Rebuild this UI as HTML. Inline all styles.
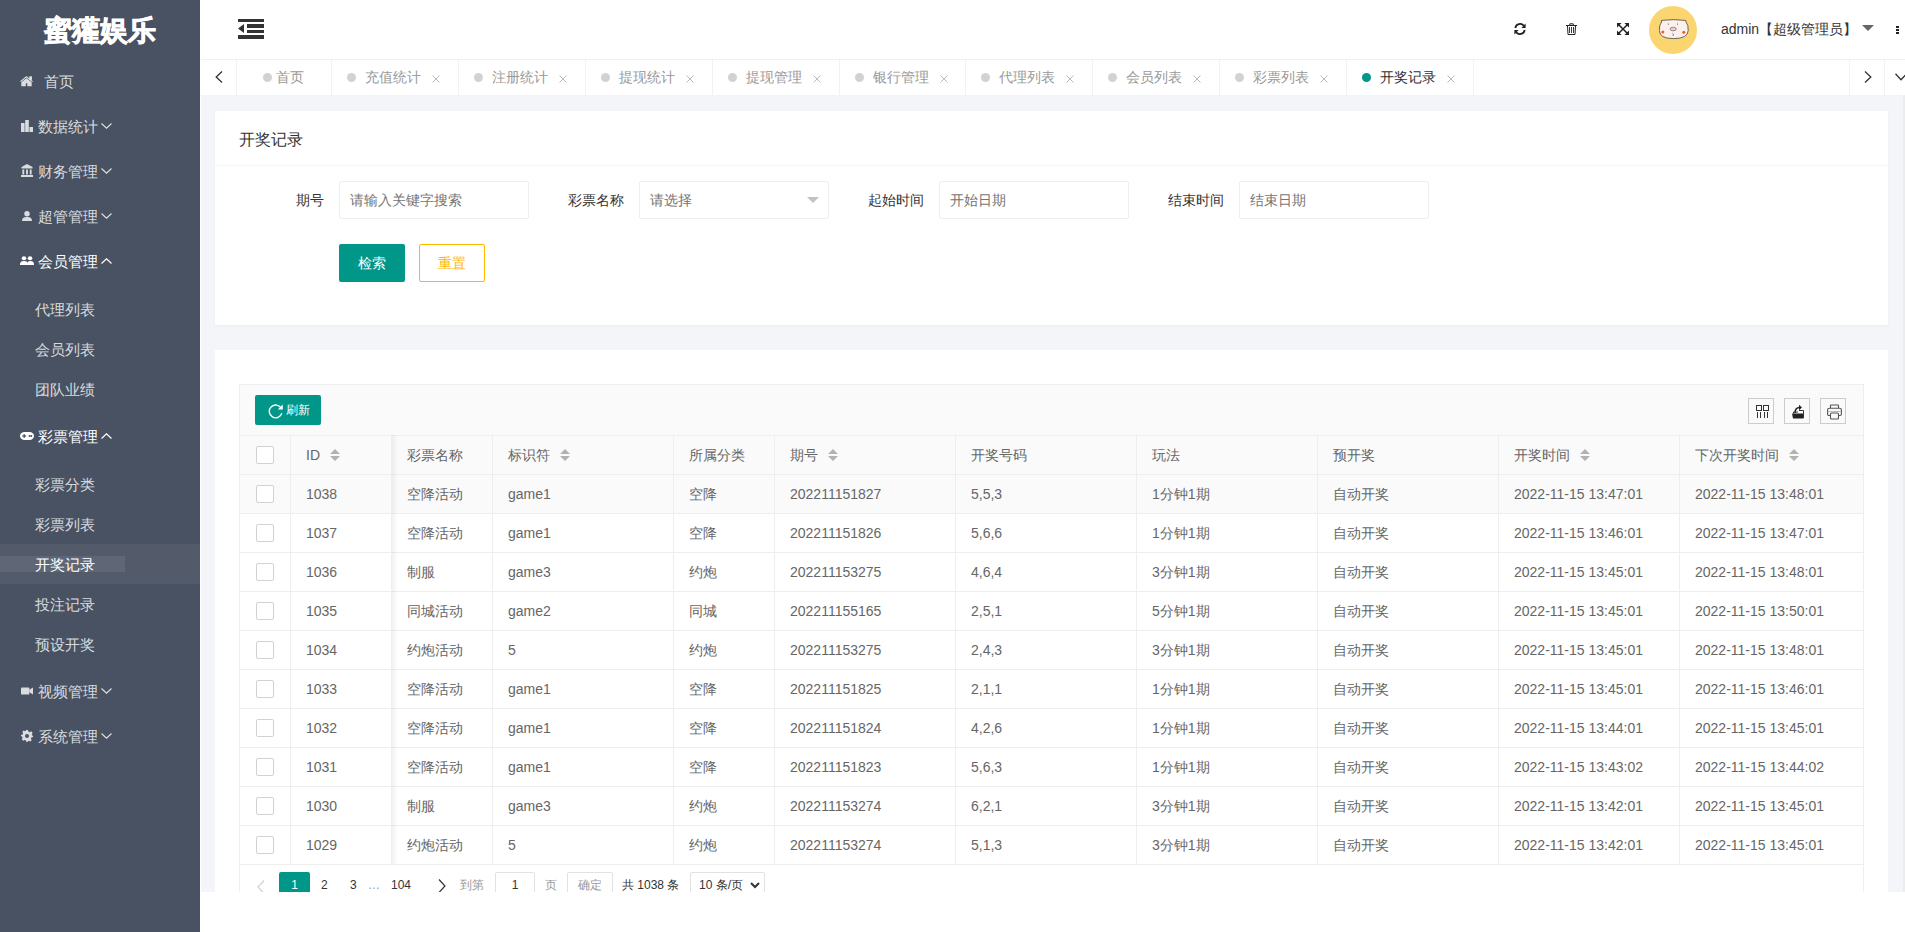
<!DOCTYPE html><html><head><meta charset="utf-8"><style>*{box-sizing:border-box;margin:0;padding:0}
html,body{width:1905px;height:932px;overflow:hidden;background:#fff;font-family:"Liberation Sans",sans-serif;font-size:14px;color:#666;position:relative}
.ab{position:absolute}
.side{position:absolute;left:0;top:0;width:200px;height:932px;background:#485262}
.logo{position:absolute;left:0;top:13px;width:200px;text-align:center;font-size:28px;font-weight:900;color:#fff;-webkit-text-stroke:0.8px #fff;line-height:36px}
.nt{color:rgba(255,255,255,.8)}
.nt svg{display:block}
.nt.w{color:#fff}
.lbl{position:absolute;font-size:15px;line-height:20px;white-space:nowrap}
.chev{position:absolute}
.selrow{position:absolute;left:0;top:544px;width:200px;height:40px;background:#535b6b}
.selin{position:absolute;left:0;top:556px;width:125px;height:16px;background:#5f6776}
.hdr{position:absolute;left:200px;top:0;width:1705px;height:59px;background:#fff}
.hdr .ab{position:absolute}
.avatar{position:absolute;left:1649px;top:6px;width:48px;height:48px;border-radius:50%;background:#fbd56f}
.uname{position:absolute;left:1721px;top:19px;font-size:14px;line-height:20px;color:#333;white-space:nowrap}
.tabs{position:absolute;left:0;top:0}
.tline{position:absolute;left:201px;top:59px;width:1704px;height:1px;background:#f0f0f0}
.vb{position:absolute;top:60px;width:1px;height:35px;background:#f2f2f2}
.dot{position:absolute;top:73px;width:9px;height:9px;border-radius:50%;background:#d2d2d2}
.dot.act{background:#009688}
.tt{position:absolute;top:67px;font-size:14px;line-height:20px;color:#999;white-space:nowrap}
.tt.act{color:#333}
.bodybg{position:absolute;left:201px;top:95px;width:1704px;height:797px;background:#f3f5f9}
.card{position:absolute;left:215px;width:1673px;background:#fff}
.c1{box-shadow:0 1px 2px rgba(0,0,0,.04)}
.c1{top:111px;height:214px}
.c2{top:350px;height:542px}
.ctitle{position:absolute;left:239px;top:129px;font-size:16.2px;line-height:20px;color:#333}
.cdiv{position:absolute;left:215px;top:165px;width:1673px;height:1px;background:#f6f6f6}
.flabel{position:absolute;top:190px;font-size:14px;line-height:20px;color:#333}
.finput{position:absolute;top:181px;width:190px;height:38px;border:1px solid #eee;border-radius:2px;background:#fff}
.finput span{position:absolute;left:10px;top:8px;line-height:20px;color:#757575;white-space:nowrap}
.btn{position:absolute;height:38px;line-height:38px;text-align:center;background:#009688;color:#fff;border-radius:2px}
.btn2{position:absolute;height:38px;line-height:36px;text-align:center;border:1px solid #ffb800;color:#ffb800;border-radius:2px;background:#fff;width:66px}
.tbox{position:absolute;left:239px;top:384px;width:1625px;height:508px;border:1px solid #eee;border-bottom:none;background:#fff}
.tool{position:absolute;left:240px;top:385px;width:1623px;height:51px;background:#fafafa;border-bottom:1px solid #eee}
.btnsm{position:absolute;left:255px;top:395px;width:66px;height:30px;background:#009688;border-radius:2px;color:#fff;font-size:12px}
.btnsm span{position:absolute;left:31px;top:7px;line-height:16px;font-size:12px}
.tsq{position:absolute;top:398px;width:26px;height:26px;border:1px solid #ccc}
.thead{position:absolute;left:240px;top:436px;width:1623px;height:38px;background:#fafafa}
.row1{position:absolute;left:240px;top:475px;width:1623px;height:38px;background:#fafafa}
.hl{position:absolute;left:240px;width:1623px;height:1px;background:#eee}
.vl{position:absolute;top:436px;width:1px;height:428px;background:#eee}
.fixshadow{position:absolute;left:392px;top:435px;width:6px;height:429px;background:linear-gradient(to right,rgba(0,0,0,.05),rgba(0,0,0,0))}
.cb{position:absolute;left:256px;width:18px;height:18px;border:1px solid #d2d2d2;border-radius:2px;background:#fff}
.th{position:absolute;top:445px;font-size:14px;line-height:20px;color:#666;white-space:nowrap}
.td{position:absolute;font-size:14px;line-height:20px;color:#666;white-space:nowrap}
.pgclip{position:absolute;left:240px;top:865px;width:1623px;height:27px;overflow:hidden}
.pg{position:absolute;top:7px;height:28px;line-height:26px;font-size:12px;text-align:center}
.pgbox{position:absolute;top:7px;height:28px;line-height:25px;font-size:12px;text-align:center;border:1px solid #e2e2e2;border-radius:2px;background:#fff}
.pg{white-space:nowrap}
</style></head><body>
<div class="side">
<div class="logo">蜜獾娱乐</div>
<div class="nt" style="left:20px;top:76px;position:absolute"><svg width="14" height="11" viewBox="0 0 14 11"><path d="M0 5.2 L6.5 0 L13 5.2 L12.2 6 L6.5 1.5 L0.8 6 Z" fill="currentColor"/><path d="M1.3 6.2 L6.5 2.2 L11.7 6.2 V10.2 H7.3 V7.2 H5.8 V10.2 H1.3 Z" fill="currentColor"/><rect x="9.3" y="0.3" width="2.7" height="3.5" fill="currentColor"/></svg></div>
<div class="nt lbl" style="left:44px;top:72px">首页</div>
<div class="nt" style="left:21px;top:120px;position:absolute"><svg width="12" height="12" viewBox="0 0 12 12"><rect x="0" y="3" width="3.6" height="9" fill="currentColor"/><rect x="4.2" y="0" width="3.6" height="12" fill="currentColor"/><rect x="8.4" y="7" width="3.6" height="5" fill="currentColor"/></svg></div>
<div class="nt lbl" style="left:38px;top:117px">数据统计</div>
<div class="nt"><svg class="chev" style="left:101px;top:123px" width="11" height="6" viewBox="0 0 11 6"><path d="M0.5 0.5 L5.5 5.2 L10.5 0.5" stroke="currentColor" stroke-width="1.2" fill="none"/></svg></div>
<div class="nt" style="left:21px;top:164px;position:absolute"><svg width="12" height="13" viewBox="0 0 13 13" preserveAspectRatio="none"><path d="M6.5 0 L0.5 3 V4.5 H12.5 V3 Z" fill="currentColor"/><rect x="1.5" y="5.5" width="2" height="5" fill="currentColor"/><rect x="5.5" y="5.5" width="2" height="5" fill="currentColor"/><rect x="9.5" y="5.5" width="2" height="5" fill="currentColor"/><rect x="0" y="11" width="13" height="2" fill="currentColor"/></svg></div>
<div class="nt lbl" style="left:38px;top:162px">财务管理</div>
<div class="nt"><svg class="chev" style="left:101px;top:168px" width="11" height="6" viewBox="0 0 11 6"><path d="M0.5 0.5 L5.5 5.2 L10.5 0.5" stroke="currentColor" stroke-width="1.2" fill="none"/></svg></div>
<div class="nt" style="left:22px;top:211px;position:absolute"><svg width="10" height="10" viewBox="0 0 11 11" preserveAspectRatio="none"><circle cx="5.5" cy="3" r="3" fill="currentColor"/><path d="M0 11 C0 7 2.5 6.5 5.5 6.5 C8.5 6.5 11 7 11 11 Z" fill="currentColor"/></svg></div>
<div class="nt lbl" style="left:38px;top:207px">超管管理</div>
<div class="nt"><svg class="chev" style="left:101px;top:213px" width="11" height="6" viewBox="0 0 11 6"><path d="M0.5 0.5 L5.5 5.2 L10.5 0.5" stroke="currentColor" stroke-width="1.2" fill="none"/></svg></div>
<div class="nt w" style="left:20px;top:256px;position:absolute"><svg width="14" height="9" viewBox="0 0 14 10" preserveAspectRatio="none"><circle cx="4" cy="2.5" r="2.3" fill="currentColor"/><circle cx="10" cy="2.5" r="2.3" fill="currentColor"/><path d="M0 10 C0 6 1.8 5.5 4 5.5 C6.2 5.5 8 6 8 10 Z" fill="currentColor"/><path d="M7 10 C7.5 6.5 8 5.5 10 5.5 C12.2 5.5 14 6 14 10 Z" fill="currentColor"/></svg></div>
<div class="nt w lbl" style="left:38px;top:252px">会员管理</div>
<div class="nt w"><svg class="chev" style="left:101px;top:258px" width="11" height="6" viewBox="0 0 11 6"><path d="M0.5 5.5 L5.5 0.8 L10.5 5.5" stroke="currentColor" stroke-width="1.2" fill="none"/></svg></div>
<div class="nt w" style="left:20px;top:432px;position:absolute"><svg width="14" height="8" viewBox="0 0 14 9" preserveAspectRatio="none"><rect x="0" y="0" width="14" height="9" rx="4.5" fill="currentColor"/><rect x="2.2" y="3.8" width="4" height="1.4" fill="#485262"/><rect x="3.5" y="2.5" width="1.4" height="4" fill="#485262"/><circle cx="9.5" cy="4.5" r="1" fill="#485262"/><circle cx="11.3" cy="4.5" r="1" fill="#485262"/></svg></div>
<div class="nt w lbl" style="left:38px;top:427px">彩票管理</div>
<div class="nt w"><svg class="chev" style="left:101px;top:433px" width="11" height="6" viewBox="0 0 11 6"><path d="M0.5 5.5 L5.5 0.8 L10.5 5.5" stroke="currentColor" stroke-width="1.2" fill="none"/></svg></div>
<div class="nt" style="left:21px;top:687px;position:absolute"><svg width="12" height="8" viewBox="0 0 13 9" preserveAspectRatio="none"><rect x="0" y="0.5" width="9" height="8" rx="1" fill="currentColor"/><path d="M9 3 L13 0.5 V8.5 L9 6 Z" fill="currentColor"/></svg></div>
<div class="nt lbl" style="left:38px;top:682px">视频管理</div>
<div class="nt"><svg class="chev" style="left:101px;top:688px" width="11" height="6" viewBox="0 0 11 6"><path d="M0.5 0.5 L5.5 5.2 L10.5 0.5" stroke="currentColor" stroke-width="1.2" fill="none"/></svg></div>
<div class="nt" style="left:21px;top:730px;position:absolute"><svg width="12" height="12" viewBox="0 0 12 12"><path fill="currentColor" fill-rule="evenodd" d="M5 0 H7 L7.4 1.6 L8.8 2.2 L10.2 1.3 L11.6 2.8 L10.8 4.3 L11.3 5.6 L12 6 V7 L10.4 7.4 L9.9 8.8 L10.7 10.2 L9.3 11.6 L7.8 10.8 L7 11.3 L6.6 12 H5.4 L5 10.4 L3.6 9.9 L2.2 10.7 L0.8 9.3 L1.6 7.8 L1.1 6.6 L0 6.2 V5 L1.6 4.6 L2.1 3.2 L1.3 1.8 L2.7 0.4 L4.2 1.2 L4.6 1.1 Z M6 4 A2 2 0 1 0 6 8 A2 2 0 1 0 6 4 Z"/></svg></div>
<div class="nt lbl" style="left:38px;top:727px">系统管理</div>
<div class="nt"><svg class="chev" style="left:101px;top:733px" width="11" height="6" viewBox="0 0 11 6"><path d="M0.5 0.5 L5.5 5.2 L10.5 0.5" stroke="currentColor" stroke-width="1.2" fill="none"/></svg></div>
<div class="selrow"></div><div class="selin"></div>
<div class="nt lbl" style="left:35px;top:300px">代理列表</div>
<div class="nt lbl" style="left:35px;top:340px">会员列表</div>
<div class="nt lbl" style="left:35px;top:380px">团队业绩</div>
<div class="nt lbl" style="left:35px;top:475px">彩票分类</div>
<div class="nt lbl" style="left:35px;top:515px">彩票列表</div>
<div class="nt w lbl" style="left:35px;top:555px">开奖记录</div>
<div class="nt lbl" style="left:35px;top:595px">投注记录</div>
<div class="nt lbl" style="left:35px;top:635px">预设开奖</div>
</div>
<div class="hdr">
<svg class="ab" style="left:38px;top:19px" width="26" height="20" viewBox="0 0 26 20"><rect x="0" y="0" width="26" height="3" fill="#333"/><rect x="9" y="5" width="17" height="4" fill="#333"/><rect x="9" y="11" width="17" height="3" fill="#333"/><rect x="0" y="16" width="26" height="4" fill="#333"/><path d="M0 9.5 L6 5 V14 Z" fill="#333"/></svg>
</div>
<div class="hdr-r">
<svg class="ab" style="left:1514px;top:23px" width="12" height="12" viewBox="0 0 12 12"><path d="M1.3 5 A4.8 4.8 0 0 1 10 3" stroke="#222" stroke-width="1.8" fill="none"/><path d="M11.6 0.6 V5 H7.4 Z" fill="#222"/><path d="M10.7 7 A4.8 4.8 0 0 1 2 9" stroke="#222" stroke-width="1.8" fill="none"/><path d="M0.4 11.4 V7 H4.6 Z" fill="#222"/></svg>
<svg class="ab" style="left:1566px;top:23px" width="11" height="12" viewBox="0 0 11 12"><path d="M0 2.5 H11" stroke="#222" stroke-width="1"/><path d="M3.8 2.3 V0.8 H7.2 V2.3" stroke="#222" stroke-width="1" fill="none"/><path d="M1.5 3 L2 11.5 H9 L9.5 3" stroke="#222" stroke-width="1" fill="none"/><path d="M3.5 4 V10 M5.5 4 V10 M7.5 4 V10" stroke="#222" stroke-width="0.9"/></svg>
<svg class="ab" style="left:1617px;top:23px" width="12" height="12" viewBox="0 0 12 12"><path d="M0 0 H4.6 L0 4.6 Z M12 0 H7.4 L12 4.6 Z M0 12 V7.4 L4.6 12 Z M12 12 V7.4 L7.4 12 Z" fill="#222"/><path d="M1.5 1.5 L10.5 10.5 M10.5 1.5 L1.5 10.5" stroke="#222" stroke-width="1.5"/></svg>
<div class="avatar"></div><svg class="ab" style="left:1659px;top:19px" width="30" height="21" viewBox="0 0 30 21"><path d="M2.5 3 Q1.5 0.8 4 1.3 Q14.5 0 25 1.3 Q27.5 0.8 27 3 Q29.6 6 29.2 11.5 Q29 19.6 14.5 19.6 Q0.3 19.6 0.4 11.5 Q0.1 6 2.5 3 Z" fill="#fcf0ef" stroke="#3a3a3a" stroke-width="0.75"/><ellipse cx="14.2" cy="10" rx="3.1" ry="1.8" fill="#f6c9c4" stroke="#555" stroke-width="0.6"/><circle cx="3.8" cy="13" r="1.5" fill="#f25a2a"/><circle cx="24.8" cy="13.3" r="1.5" fill="#f25a2a"/><path d="M9.3 4.3 V6 M18.5 4.3 V6" stroke="#666" stroke-width="0.7"/><path d="M13.5 14.5 Q15 15.5 14 17" stroke="#555" stroke-width="0.8" fill="none"/></svg>
<div class="uname">admin【超级管理员】</div>
<svg class="ab" style="left:1862px;top:25px" width="12" height="6" viewBox="0 0 12 6"><path d="M0 0 H12 L6 6 Z" fill="#666"/></svg>
<div class="ab" style="left:1896px;top:26px;width:3px;height:2px;background:#222"></div><div class="ab" style="left:1896px;top:29px;width:3px;height:2px;background:#222"></div><div class="ab" style="left:1896px;top:32px;width:3px;height:2px;background:#222"></div>
</div>
<div class="tabs">
<div class="tline"></div>
<svg class="ab" style="left:215px;top:71px" width="8" height="12" viewBox="0 0 8 12"><path d="M7 0.5 L1.2 6 L7 11.5" stroke="#333" stroke-width="1.3" fill="none"/></svg>
<div class="vb" style="left:236px"></div>
<div class="dot" style="left:263px"></div><div class="tt" style="left:276px">首页</div>
<div class="vb" style="left:331px"></div>
<div class="dot" style="left:347px"></div><div class="tt" style="left:365px">充值统计</div>
<svg class="ab" style="left:432px;top:75px" width="8" height="8" viewBox="0 0 8 8"><path d="M0.5 0.5 L7.5 7.5 M7.5 0.5 L0.5 7.5" stroke="#bbb" stroke-width="1"/></svg>
<div class="vb" style="left:458px"></div>
<div class="dot" style="left:474px"></div><div class="tt" style="left:492px">注册统计</div>
<svg class="ab" style="left:559px;top:75px" width="8" height="8" viewBox="0 0 8 8"><path d="M0.5 0.5 L7.5 7.5 M7.5 0.5 L0.5 7.5" stroke="#bbb" stroke-width="1"/></svg>
<div class="vb" style="left:585px"></div>
<div class="dot" style="left:601px"></div><div class="tt" style="left:619px">提现统计</div>
<svg class="ab" style="left:686px;top:75px" width="8" height="8" viewBox="0 0 8 8"><path d="M0.5 0.5 L7.5 7.5 M7.5 0.5 L0.5 7.5" stroke="#bbb" stroke-width="1"/></svg>
<div class="vb" style="left:712px"></div>
<div class="dot" style="left:728px"></div><div class="tt" style="left:746px">提现管理</div>
<svg class="ab" style="left:813px;top:75px" width="8" height="8" viewBox="0 0 8 8"><path d="M0.5 0.5 L7.5 7.5 M7.5 0.5 L0.5 7.5" stroke="#bbb" stroke-width="1"/></svg>
<div class="vb" style="left:839px"></div>
<div class="dot" style="left:855px"></div><div class="tt" style="left:873px">银行管理</div>
<svg class="ab" style="left:940px;top:75px" width="8" height="8" viewBox="0 0 8 8"><path d="M0.5 0.5 L7.5 7.5 M7.5 0.5 L0.5 7.5" stroke="#bbb" stroke-width="1"/></svg>
<div class="vb" style="left:965px"></div>
<div class="dot" style="left:981px"></div><div class="tt" style="left:999px">代理列表</div>
<svg class="ab" style="left:1066px;top:75px" width="8" height="8" viewBox="0 0 8 8"><path d="M0.5 0.5 L7.5 7.5 M7.5 0.5 L0.5 7.5" stroke="#bbb" stroke-width="1"/></svg>
<div class="vb" style="left:1092px"></div>
<div class="dot" style="left:1108px"></div><div class="tt" style="left:1126px">会员列表</div>
<svg class="ab" style="left:1193px;top:75px" width="8" height="8" viewBox="0 0 8 8"><path d="M0.5 0.5 L7.5 7.5 M7.5 0.5 L0.5 7.5" stroke="#bbb" stroke-width="1"/></svg>
<div class="vb" style="left:1219px"></div>
<div class="dot" style="left:1235px"></div><div class="tt" style="left:1253px">彩票列表</div>
<svg class="ab" style="left:1320px;top:75px" width="8" height="8" viewBox="0 0 8 8"><path d="M0.5 0.5 L7.5 7.5 M7.5 0.5 L0.5 7.5" stroke="#bbb" stroke-width="1"/></svg>
<div class="vb" style="left:1346px"></div>
<div class="dot act" style="left:1362px"></div><div class="tt act" style="left:1380px">开奖记录</div>
<svg class="ab" style="left:1447px;top:75px" width="8" height="8" viewBox="0 0 8 8"><path d="M0.5 0.5 L7.5 7.5 M7.5 0.5 L0.5 7.5" stroke="#bbb" stroke-width="1"/></svg>
<div class="vb" style="left:1473px"></div>
<div class="vb" style="left:1849px"></div><div class="vb" style="left:1884px"></div>
<svg class="ab" style="left:1864px;top:71px" width="8" height="12" viewBox="0 0 8 12"><path d="M1 0.5 L6.8 6 L1 11.5" stroke="#333" stroke-width="1.3" fill="none"/></svg>
<svg class="ab" style="left:1895px;top:73px" width="12" height="8" viewBox="0 0 12 8"><path d="M0.5 0.8 L6 6.8 L11.5 0.8" stroke="#333" stroke-width="1.3" fill="none"/></svg>
</div>
<div class="bodybg"></div><div class="ab" style="left:1903px;top:95px;width:2px;height:797px;background:#ececec"></div><div class="ab" style="left:201px;top:95px;width:1702px;height:1px;background:#f3f3f3"></div>
<div class="card c1"></div>
<div class="ctitle">开奖记录</div><div class="cdiv"></div>
<div class="flabel" style="left:296px">期号</div>
<div class="finput" style="left:339px"><span>请输入关键字搜索</span></div>
<div class="flabel" style="left:568px">彩票名称</div>
<div class="finput" style="left:639px"><span>请选择</span></div>
<div class="flabel" style="left:868px">起始时间</div>
<div class="finput" style="left:939px"><span>开始日期</span></div>
<div class="flabel" style="left:1168px">结束时间</div>
<div class="finput" style="left:1239px"><span>结束日期</span></div>
<svg class="ab" style="left:807px;top:197px" width="12" height="6" viewBox="0 0 12 6"><path d="M0 0 H12 L6 6 Z" fill="#c2c2c2"/></svg>
<div class="btn" style="left:339px;top:244px;width:66px">检索</div>
<div class="btn2" style="left:419px;top:244px;width:66px">重置</div>
<div class="card c2"></div>
<div class="tbox"></div>
<div class="tool"></div>
<div class="btnsm"><svg width="16" height="16" viewBox="0 0 15 15" style="position:absolute;left:13px;top:8px"><path d="M12.5 5 A6 6 0 1 0 13 9.5" stroke="#fff" stroke-width="1.3" fill="none"/><path d="M13.8 1.5 V6.2 H9.2 Z" fill="#fff"/></svg><span>刷新</span></div>
<div class="tsq" style="left:1748px"></div>
<div class="tsq" style="left:1784px"></div>
<div class="tsq" style="left:1820px"></div>
<svg class="ab" style="left:1756px;top:405px" width="14" height="14" viewBox="0 0 14 14"><rect x="0.5" y="0.5" width="5" height="5" stroke="#333" fill="none"/><rect x="7.5" y="0.5" width="5" height="5" stroke="#333" fill="none"/><path d="M1.5 7 V13 M4.5 7 V13 M8.5 7 V13 M11.5 7 V13" stroke="#333" stroke-width="1"/></svg>
<svg class="ab" style="left:1791px;top:404px" width="14" height="15" viewBox="0 0 14 15"><path d="M1 9.5 H12.5 V14.5 H2 Z" fill="#222"/><path d="M2.5 9.5 V8 H7" stroke="#333" stroke-width="1" fill="none"/><path d="M8 6.5 H12.5 V14" stroke="#333" stroke-width="1" fill="none"/><path d="M4 9 C4 5 6 3.5 8.5 3.5" stroke="#222" stroke-width="1.6" fill="none"/><path d="M8 0.8 L11 3.5 L8 6.2 Z" fill="#222"/></svg>
<svg class="ab" style="left:1827px;top:404px" width="15" height="16" viewBox="0 0 15 16"><path d="M3.5 4 V1.5 Q3.5 1 4 1 H11 Q11.5 1 11.5 1.5 V4" stroke="#555" stroke-width="1.1" fill="none"/><path d="M3 11.5 H2 Q0.6 11.5 0.6 10 V6 Q0.6 4.2 2.4 4.2 H12.6 Q14.4 4.2 14.4 6 V10 Q14.4 11.5 13 11.5 H12" stroke="#555" stroke-width="1.1" fill="none"/><path d="M0.8 7.5 H14.2" stroke="#aaa" stroke-width="0.8"/><rect x="3.5" y="9" width="8" height="6" rx="1" stroke="#555" stroke-width="1.1" fill="#fafafa"/></svg>
<div class="thead"></div>
<div class="row1"></div>
<div class="hl" style="top:474px"></div>
<div class="hl" style="top:513px"></div>
<div class="hl" style="top:552px"></div>
<div class="hl" style="top:591px"></div>
<div class="hl" style="top:630px"></div>
<div class="hl" style="top:669px"></div>
<div class="hl" style="top:708px"></div>
<div class="hl" style="top:747px"></div>
<div class="hl" style="top:786px"></div>
<div class="hl" style="top:825px"></div>
<div class="hl" style="top:864px"></div>
<div class="vl" style="left:290px"></div>
<div class="vl" style="left:391px"></div>
<div class="vl" style="left:492px"></div>
<div class="vl" style="left:673px"></div>
<div class="vl" style="left:774px"></div>
<div class="vl" style="left:955px"></div>
<div class="vl" style="left:1136px"></div>
<div class="vl" style="left:1317px"></div>
<div class="vl" style="left:1498px"></div>
<div class="vl" style="left:1679px"></div>
<div class="fixshadow"></div>
<div class="cb" style="top:446px"></div>
<div class="cb" style="top:485px"></div>
<div class="cb" style="top:524px"></div>
<div class="cb" style="top:563px"></div>
<div class="cb" style="top:602px"></div>
<div class="cb" style="top:641px"></div>
<div class="cb" style="top:680px"></div>
<div class="cb" style="top:719px"></div>
<div class="cb" style="top:758px"></div>
<div class="cb" style="top:797px"></div>
<div class="cb" style="top:836px"></div>
<div class="th" style="left:306px">ID</div>
<svg class="ab" style="left:330px;top:449px" width="10" height="12" viewBox="0 0 10 12"><path d="M5 0 L10 5 H0 Z M0 7 H10 L5 12 Z" fill="#b2b2b2"/></svg>
<div class="th" style="left:407px">彩票名称</div>
<div class="th" style="left:508px">标识符</div>
<svg class="ab" style="left:560px;top:449px" width="10" height="12" viewBox="0 0 10 12"><path d="M5 0 L10 5 H0 Z M0 7 H10 L5 12 Z" fill="#b2b2b2"/></svg>
<div class="th" style="left:689px">所属分类</div>
<div class="th" style="left:790px">期号</div>
<svg class="ab" style="left:828px;top:449px" width="10" height="12" viewBox="0 0 10 12"><path d="M5 0 L10 5 H0 Z M0 7 H10 L5 12 Z" fill="#b2b2b2"/></svg>
<div class="th" style="left:971px">开奖号码</div>
<div class="th" style="left:1152px">玩法</div>
<div class="th" style="left:1333px">预开奖</div>
<div class="th" style="left:1514px">开奖时间</div>
<svg class="ab" style="left:1580px;top:449px" width="10" height="12" viewBox="0 0 10 12"><path d="M5 0 L10 5 H0 Z M0 7 H10 L5 12 Z" fill="#b2b2b2"/></svg>
<div class="th" style="left:1695px">下次开奖时间</div>
<svg class="ab" style="left:1789px;top:449px" width="10" height="12" viewBox="0 0 10 12"><path d="M5 0 L10 5 H0 Z M0 7 H10 L5 12 Z" fill="#b2b2b2"/></svg>
<div class="td" style="left:306px;top:484px">1038</div>
<div class="td" style="left:407px;top:484px">空降活动</div>
<div class="td" style="left:508px;top:484px">game1</div>
<div class="td" style="left:689px;top:484px">空降</div>
<div class="td" style="left:790px;top:484px">202211151827</div>
<div class="td" style="left:971px;top:484px">5,5,3</div>
<div class="td" style="left:1152px;top:484px">1分钟1期</div>
<div class="td" style="left:1333px;top:484px">自动开奖</div>
<div class="td" style="left:1514px;top:484px">2022-11-15 13:47:01</div>
<div class="td" style="left:1695px;top:484px">2022-11-15 13:48:01</div>
<div class="td" style="left:306px;top:523px">1037</div>
<div class="td" style="left:407px;top:523px">空降活动</div>
<div class="td" style="left:508px;top:523px">game1</div>
<div class="td" style="left:689px;top:523px">空降</div>
<div class="td" style="left:790px;top:523px">202211151826</div>
<div class="td" style="left:971px;top:523px">5,6,6</div>
<div class="td" style="left:1152px;top:523px">1分钟1期</div>
<div class="td" style="left:1333px;top:523px">自动开奖</div>
<div class="td" style="left:1514px;top:523px">2022-11-15 13:46:01</div>
<div class="td" style="left:1695px;top:523px">2022-11-15 13:47:01</div>
<div class="td" style="left:306px;top:562px">1036</div>
<div class="td" style="left:407px;top:562px">制服</div>
<div class="td" style="left:508px;top:562px">game3</div>
<div class="td" style="left:689px;top:562px">约炮</div>
<div class="td" style="left:790px;top:562px">202211153275</div>
<div class="td" style="left:971px;top:562px">4,6,4</div>
<div class="td" style="left:1152px;top:562px">3分钟1期</div>
<div class="td" style="left:1333px;top:562px">自动开奖</div>
<div class="td" style="left:1514px;top:562px">2022-11-15 13:45:01</div>
<div class="td" style="left:1695px;top:562px">2022-11-15 13:48:01</div>
<div class="td" style="left:306px;top:601px">1035</div>
<div class="td" style="left:407px;top:601px">同城活动</div>
<div class="td" style="left:508px;top:601px">game2</div>
<div class="td" style="left:689px;top:601px">同城</div>
<div class="td" style="left:790px;top:601px">202211155165</div>
<div class="td" style="left:971px;top:601px">2,5,1</div>
<div class="td" style="left:1152px;top:601px">5分钟1期</div>
<div class="td" style="left:1333px;top:601px">自动开奖</div>
<div class="td" style="left:1514px;top:601px">2022-11-15 13:45:01</div>
<div class="td" style="left:1695px;top:601px">2022-11-15 13:50:01</div>
<div class="td" style="left:306px;top:640px">1034</div>
<div class="td" style="left:407px;top:640px">约炮活动</div>
<div class="td" style="left:508px;top:640px">5</div>
<div class="td" style="left:689px;top:640px">约炮</div>
<div class="td" style="left:790px;top:640px">202211153275</div>
<div class="td" style="left:971px;top:640px">2,4,3</div>
<div class="td" style="left:1152px;top:640px">3分钟1期</div>
<div class="td" style="left:1333px;top:640px">自动开奖</div>
<div class="td" style="left:1514px;top:640px">2022-11-15 13:45:01</div>
<div class="td" style="left:1695px;top:640px">2022-11-15 13:48:01</div>
<div class="td" style="left:306px;top:679px">1033</div>
<div class="td" style="left:407px;top:679px">空降活动</div>
<div class="td" style="left:508px;top:679px">game1</div>
<div class="td" style="left:689px;top:679px">空降</div>
<div class="td" style="left:790px;top:679px">202211151825</div>
<div class="td" style="left:971px;top:679px">2,1,1</div>
<div class="td" style="left:1152px;top:679px">1分钟1期</div>
<div class="td" style="left:1333px;top:679px">自动开奖</div>
<div class="td" style="left:1514px;top:679px">2022-11-15 13:45:01</div>
<div class="td" style="left:1695px;top:679px">2022-11-15 13:46:01</div>
<div class="td" style="left:306px;top:718px">1032</div>
<div class="td" style="left:407px;top:718px">空降活动</div>
<div class="td" style="left:508px;top:718px">game1</div>
<div class="td" style="left:689px;top:718px">空降</div>
<div class="td" style="left:790px;top:718px">202211151824</div>
<div class="td" style="left:971px;top:718px">4,2,6</div>
<div class="td" style="left:1152px;top:718px">1分钟1期</div>
<div class="td" style="left:1333px;top:718px">自动开奖</div>
<div class="td" style="left:1514px;top:718px">2022-11-15 13:44:01</div>
<div class="td" style="left:1695px;top:718px">2022-11-15 13:45:01</div>
<div class="td" style="left:306px;top:757px">1031</div>
<div class="td" style="left:407px;top:757px">空降活动</div>
<div class="td" style="left:508px;top:757px">game1</div>
<div class="td" style="left:689px;top:757px">空降</div>
<div class="td" style="left:790px;top:757px">202211151823</div>
<div class="td" style="left:971px;top:757px">5,6,3</div>
<div class="td" style="left:1152px;top:757px">1分钟1期</div>
<div class="td" style="left:1333px;top:757px">自动开奖</div>
<div class="td" style="left:1514px;top:757px">2022-11-15 13:43:02</div>
<div class="td" style="left:1695px;top:757px">2022-11-15 13:44:02</div>
<div class="td" style="left:306px;top:796px">1030</div>
<div class="td" style="left:407px;top:796px">制服</div>
<div class="td" style="left:508px;top:796px">game3</div>
<div class="td" style="left:689px;top:796px">约炮</div>
<div class="td" style="left:790px;top:796px">202211153274</div>
<div class="td" style="left:971px;top:796px">6,2,1</div>
<div class="td" style="left:1152px;top:796px">3分钟1期</div>
<div class="td" style="left:1333px;top:796px">自动开奖</div>
<div class="td" style="left:1514px;top:796px">2022-11-15 13:42:01</div>
<div class="td" style="left:1695px;top:796px">2022-11-15 13:45:01</div>
<div class="td" style="left:306px;top:835px">1029</div>
<div class="td" style="left:407px;top:835px">约炮活动</div>
<div class="td" style="left:508px;top:835px">5</div>
<div class="td" style="left:689px;top:835px">约炮</div>
<div class="td" style="left:790px;top:835px">202211153274</div>
<div class="td" style="left:971px;top:835px">5,1,3</div>
<div class="td" style="left:1152px;top:835px">3分钟1期</div>
<div class="td" style="left:1333px;top:835px">自动开奖</div>
<div class="td" style="left:1514px;top:835px">2022-11-15 13:42:01</div>
<div class="td" style="left:1695px;top:835px">2022-11-15 13:45:01</div>

<div class="pgclip">
<svg class="ab" style="left:17px;top:15px" width="8" height="14" viewBox="0 0 8 14"><path d="M7 0.5 L1 7 L7 13.5" stroke="#d2d2d2" stroke-width="1.2" fill="none"/></svg>
<div class="pg" style="left:39px;width:31px;background:#009688;color:#fff;border-radius:2px">1</div>
<div class="pg" style="left:81px;color:#333">2</div>
<div class="pg" style="left:110px;color:#333">3</div>
<div class="pg" style="left:128px;color:#999">…</div>
<div class="pg" style="left:151px;color:#333">104</div>
<svg class="ab" style="left:198px;top:14px" width="8" height="14" viewBox="0 0 8 14"><path d="M1 0.5 L7 7 L1 13.5" stroke="#333" stroke-width="1.2" fill="none"/></svg>
<div class="pg" style="left:220px;color:#999">到第</div>
<div class="pgbox" style="left:255px;width:40px;color:#333">1</div>
<div class="pg" style="left:305px;color:#999">页</div>
<div class="pgbox" style="left:327px;width:46px;color:#999">确定</div>
<div class="pg" style="left:382px;color:#333">共 1038 条</div>
<div class="pgbox" style="left:450px;width:75px;color:#333;text-align:left;padding-left:8px">10 条/页</div>
<svg class="ab" style="left:510px;top:17px" width="10" height="7" viewBox="0 0 10 7"><path d="M1 1 L5 5 L9 1" stroke="#333" stroke-width="2" fill="none"/></svg>
</div>
</body></html>
